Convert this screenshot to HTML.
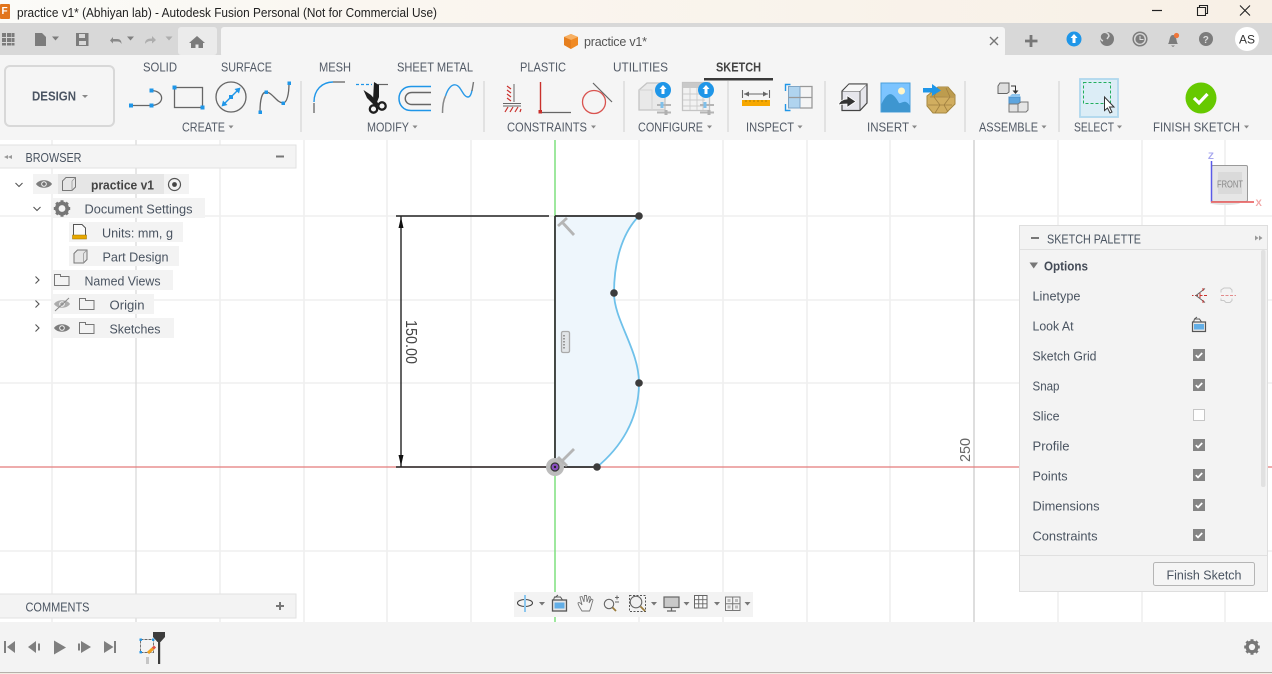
<!DOCTYPE html>
<html><head><meta charset="utf-8"><title>practice v1</title>
<style>
html,body{margin:0;padding:0;background:#fff;width:1272px;height:674px;overflow:hidden}
svg{display:block}
text{font-family:"Liberation Sans",sans-serif;fill:#4b5563;font-size:12px}
.t{font-size:13px;fill:#525a66}
.b{font-size:13px;fill:#4a5461}
.g{fill:#777;stroke:none}
.l{fill:none;stroke:#666;stroke-width:1.3}
.bl{fill:#1f96e8;stroke:none}
</style></head><body>
<svg width="1272" height="674" viewBox="0 0 1272 674" xmlns="http://www.w3.org/2000/svg">
<defs>
<linearGradient id="tb" x1="0" x2="1" y1="0" y2="0"><stop offset="0" stop-color="#fbfbf8"/><stop offset=".3" stop-color="#faf6f0"/><stop offset="1" stop-color="#f8f0e6"/></linearGradient>
<symbol id="cb" viewBox="0 0 12 12" overflow="visible"><rect width="12" height="12" fill="#858585"/><path d="M2.8 6.2l2.2 2.2 4.2-4.4" fill="none" stroke="#fff" stroke-width="1.7"/></symbol>
<symbol id="folder" viewBox="0 0 16 12" overflow="visible"><path d="M.5 11.5V.5H6.5V2.5H15V11.5Z" fill="none" stroke="#777" stroke-width="1"/></symbol>
<symbol id="eye" viewBox="0 0 16 10" overflow="visible"><path d="M0 5C3 0 13 0 16 5C13 10 3 10 0 5Z" fill="#7d7d7d"/><circle cx="8" cy="5" r="2.8" fill="#f5f5f5"/><circle cx="8" cy="5" r="1.8" fill="#707070"/></symbol>
<symbol id="cube" viewBox="0 0 14 14" overflow="visible"><path d="M.5 4L4 .5H13.5V10L10 13.5H.5Z" fill="#e6e6e6" stroke="#777"/><path d="M10 13.5V4M10 4L13.5 .5" fill="none" stroke="#999" stroke-width=".8"/></symbol>
</defs>

<!-- canvas -->
<rect width="1272" height="674" fill="#fff"/>
<g stroke="#efefef" stroke-width="1.6">
<path d="M52 140V622M220 140V622M304 140V622M387 140V622M471 140V622M639 140V622M723 140V622M807 140V622M890 140V622M1058 140V622M1142 140V622M1225 140V622"/>
<path d="M0 216H1272M0 300H1272M0 383H1272M0 551H1272"/>
</g>
<path d="M136 140V622" stroke="#dddddd" stroke-width="1.4"/>
<path d="M974 140V622" stroke="#cfcfcf" stroke-width="1.4"/>
<path d="M555 140V622" stroke="#7fe07f" stroke-width="1.5"/>
<path d="M0 467H1272" stroke="#e37b7b" stroke-width="1.2"/>

<!-- sketch -->
<path d="M555 216H639C622 233 614 262 614 293C614 320 639 350 639 383C639 420 620 448 597 467H555Z" fill="#eef6fc"/>
<path d="M639 216C622 233 614 262 614 293C614 320 639 350 639 383C639 420 620 448 597 467" fill="none" stroke="#6fc1ea" stroke-width="1.8"/>
<path d="M555 216H639M555 216V467M555 467H597" fill="none" stroke="#2c2c2c" stroke-width="1.7"/>
<path d="M396 216H549M396 467H549M401 216V467" fill="none" stroke="#222" stroke-width="1.4"/>
<path d="M401 217l-2.5 11h5zM401 466l-2.5-11h5z" fill="#111"/>
<g fill="#3c3c3c"><circle cx="639" cy="216" r="3.8"/><circle cx="614" cy="293" r="3.8"/><circle cx="639" cy="383" r="3.8"/><circle cx="597" cy="467" r="3.8"/></g>
<circle cx="555" cy="467" r="9" fill="#bcbcbc"/>
<circle cx="555" cy="467" r="4" fill="#8a4fc0" stroke="#333" stroke-width="1.2"/>
<circle cx="555" cy="467" r="1.2" fill="#222"/>
<g stroke="#b5b5b5" stroke-width="2.8" fill="none">
<path d="M558 226L567 218M562 222L574 235"/>
<path d="M558 457L567 466M562 461L574 449"/>
</g>
<rect x="561.500" y="331.500" width="8" height="21" rx="1.500" fill="#e2e5e8" stroke="#aaa" stroke-width="1.300"/>
<path d="M564 335v14" stroke="#999" stroke-width="2" stroke-dasharray="1.500 1.500"/>
<text transform="translate(406,320) rotate(90)" style="font-size:15.500px;fill:#444" textLength="44" lengthAdjust="spacingAndGlyphs">150.00</text>
<text transform="translate(970,462) rotate(-90)" style="font-size:15px;fill:#666" textLength="24" lengthAdjust="spacingAndGlyphs">250</text>

<!-- title bar -->
<rect width="1272" height="23" fill="url(#tb)"/>
<rect x="0" y="4" width="10" height="15" rx="1" fill="#e2751c"/>
<text x="1.500" y="14" style="font-size:10px;font-weight:bold;fill:#fff">F</text>
<text x="17" y="17" style="font-size:12.500px;fill:#222" textLength="420" lengthAdjust="spacingAndGlyphs">practice v1* (Abhiyan lab) - Autodesk Fusion Personal (Not for Commercial Use)</text>
<path d="M1152 10.500H1162" stroke="#222" stroke-width="1.200"/>
<path d="M1197.500 7.500H1205.500V15.500H1197.500ZM1199.500 7V5.500H1207.500V13.500H1206" fill="none" stroke="#222" stroke-width="1.100"/>
<path d="M1240 5.500L1250 15.500M1250 5.500L1240 15.500" stroke="#222" stroke-width="1.100"/>

<!-- tab bar -->
<rect y="23" width="1272" height="32" fill="#d8d8d8"/>
<rect x="178" y="27" width="39" height="28" rx="3" fill="#ebebeb"/>
<rect x="221" y="27" width="784" height="30" rx="3" fill="#f5f5f5"/>
<g fill="#7c7c7c">
<path d="M2 33h4v4h-4zM7 33h4v4h-4zM11.500 33h3v4h-3zM2 38h4v4h-4zM7 38h4v4h-4zM11.500 38h3v4h-3zM2 43h4v2.500h-4zM7 43h4v2.500h-4zM11.500 43h3v2.500h-3z"/>
<path d="M35 33h7l4 4v9H35z"/><path d="M52 36.500h7l-3.500 4z"/>
<path d="M76 33h12.500v13H76z"/>
</g>
<rect x="79" y="34" width="6" height="4" fill="#d8d8d8"/><rect x="79" y="41" width="7" height="4" fill="#d8d8d8"/>
<path d="M110 40.500l3-3.500v2h4c3 0 4.500 1.500 4.500 5c-1-2-2-2.500-4.500-2.500h-4v2z" fill="#888"/>
<path d="M127 36.500h7l-3.500 4z" fill="#808080"/>
<path d="M165.500 36.500h7l-3.500 4z" fill="#adadad"/>
<path d="M145 44c0-4 2-5.500 7-5.500v-2.500l4 4-4 3.500v-2.500c-3.500 0-5 .5-7 3z" fill="#adadad"/>
<path d="M197 36l-8 7h2v5h4.500v-3.500h3V48h4.500v-5h2z" fill="#7c7c7c"/>
<path d="M571 34l7 3v8l-7 4-7-4v-8z" fill="#f08a24"/><path d="M564 37l7 3 7-3-7-3z" fill="#f7b063"/><path d="M571 40v9l-7-4v-8z" fill="#e67f1f"/>
<text x="584" y="46" style="font-size:12.500px;fill:#555" textLength="63">practice v1*</text>
<path d="M990 37l8 8M998 37l-8 8" stroke="#777" stroke-width="1.400"/>
<path d="M1031 35v12M1025 41h12.500" stroke="#777" stroke-width="2.800"/>
<circle cx="1074" cy="39" r="7.500" fill="#1f96e8"/><path d="M1074 34l3.500 4h-2v5h-3v-5h-2z" fill="#fff"/>
<circle cx="1107" cy="39" r="7" fill="#7c7c7c"/><path d="M1103 41a4.500 4.500 0 1 1 6 -5l-2 3" stroke="#d8d8d8" stroke-width="1.500" fill="none"/>
<circle cx="1140" cy="39" r="6.800" fill="none" stroke="#7c7c7c" stroke-width="1.500"/><circle cx="1140" cy="39" r="4.600" fill="#7c7c7c"/><path d="M1140 36v3.500h3.500" stroke="#e0e0e0" stroke-width="1" fill="none"/>
<path d="M1168 44c2-2 1-9 5-9s3 7 5 9zM1171 45.500h4l-2 1.500z" fill="#7c7c7c"/><circle cx="1176.500" cy="35.500" r="2.600" fill="#f0763a"/>
<circle cx="1206" cy="39" r="7" fill="#7c7c7c"/><text x="1202.700" y="43" style="font-size:10px;font-weight:bold;fill:#ddd">?</text>
<circle cx="1247" cy="39" r="12" fill="#fff"/>
<text x="1247" y="43.500" text-anchor="middle" style="font-size:12px;fill:#333">AS</text>

<!-- toolbar -->
<rect y="55" width="1272" height="85" fill="#f5f5f5"/>
<rect x="5" y="66" width="109" height="60" rx="5" fill="#f5f5f5" stroke="#d8d8d8" stroke-width="2"/>
<text x="32" y="100.500" style="font-size:13px;font-weight:bold;fill:#4b5563" textLength="44" lengthAdjust="spacingAndGlyphs">DESIGN</text>
<path d="M82 95h6l-3 3z" fill="#888"/>

<g class="tabs">
<text class="t" x="143" y="71.500" textLength="34" lengthAdjust="spacingAndGlyphs">SOLID</text>
<text class="t" x="221" y="71.500" textLength="51" lengthAdjust="spacingAndGlyphs">SURFACE</text>
<text class="t" x="319" y="71.500" textLength="32" lengthAdjust="spacingAndGlyphs">MESH</text>
<text class="t" x="397" y="71.500" textLength="76" lengthAdjust="spacingAndGlyphs">SHEET METAL</text>
<text class="t" x="520" y="71.500" textLength="46" lengthAdjust="spacingAndGlyphs">PLASTIC</text>
<text class="t" x="613" y="71.500" textLength="55" lengthAdjust="spacingAndGlyphs">UTILITIES</text>
<text x="716" y="71.500" style="font-size:13px;font-weight:bold;fill:#444" textLength="45" lengthAdjust="spacingAndGlyphs">SKETCH</text>
</g>
<rect x="704" y="78" width="69" height="2.500" fill="#3a3a3a"/>

<g stroke="#dcdcdc" stroke-width="1.500">
<path d="M301 81V132M484 81V132M624 81V132M728 81V132M825 81V132M965 81V132M1059 81V132"/>
</g>

<g>
<text class="t" x="182" y="131.500" textLength="43" lengthAdjust="spacingAndGlyphs">CREATE</text>
<text class="t" x="367" y="131.500" textLength="42" lengthAdjust="spacingAndGlyphs">MODIFY</text>
<text class="t" x="507" y="131.500" textLength="80" lengthAdjust="spacingAndGlyphs">CONSTRAINTS</text>
<text class="t" x="638" y="131.500" textLength="65" lengthAdjust="spacingAndGlyphs">CONFIGURE</text>
<text class="t" x="746" y="131.500" textLength="48" lengthAdjust="spacingAndGlyphs">INSPECT</text>
<text class="t" x="867" y="131.500" textLength="42" lengthAdjust="spacingAndGlyphs">INSERT</text>
<text class="t" x="979" y="131.500" textLength="59" lengthAdjust="spacingAndGlyphs">ASSEMBLE</text>
<text class="t" x="1074" y="131.500" textLength="40" lengthAdjust="spacingAndGlyphs">SELECT</text>
<text class="t" x="1153" y="131.500" textLength="87" lengthAdjust="spacingAndGlyphs">FINISH SKETCH</text>
</g>
<path d="M228.500 125.500h5l-2.500 3zM412.500 125.500h5l-2.500 3zM591 125.500h5l-2.500 3zM707 125.500h5l-2.500 3zM797.500 125.500h5l-2.500 3zM912 125.500h5l-2.500 3zM1041.500 125.500h5l-2.500 3zM1117 125.500h5l-2.500 3zM1244 125.500h5l-2.500 3z" fill="#888"/>

<!-- create icons -->
<path d="M131 105.500H151.500M151.500 90.500C165 91 165 105 151.500 105.500" class="l"/>
<g class="bl"><rect x="129" y="103.500" width="4" height="4"/><rect x="149.500" y="103.500" width="4" height="4"/><rect x="149.500" y="88.500" width="4" height="4"/></g>
<rect x="174.500" y="87.500" width="28" height="20" class="l"/>
<g class="bl"><rect x="172.500" y="85.500" width="4" height="4"/><rect x="200.500" y="105.500" width="4" height="4"/></g>
<circle cx="231" cy="97" r="15" class="l"/>
<path d="M223 105L239 89" stroke="#1f96e8" stroke-width="1.400"/>
<path d="M221.500 106.500l1.500-6 4.500 4.500zM240.500 87.500l-1.500 6-4.500-4.500z" class="bl"/><rect x="229" y="95" width="4" height="4" class="bl"/>
<path d="M260 112C260 100 262 92 266 92C272 92 277 103 283 103C287 103 289 94 289 83" class="l"/>
<g class="bl"><rect x="258.500" y="110.500" width="3.500" height="3.500"/><rect x="264.500" y="90.500" width="3.500" height="3.500"/><rect x="281.500" y="101.500" width="3.500" height="3.500"/><rect x="287.500" y="81.500" width="3.500" height="3.500"/></g>
<!-- modify icons -->
<path d="M314 113V103" class="l"/><path d="M333 82H345" class="l"/>
<path d="M314 102C314 90 322 82 333 82" fill="none" stroke="#1f96e8" stroke-width="1.400"/>
<path d="M356 84.500H372" stroke="#1f96e8" stroke-width="1.200" stroke-dasharray="3 2"/><path d="M378 84.500H388" stroke="#666" stroke-width="1.200"/>
<path d="M374 82L379 85L379 97L376.500 103.500L373 100.500Z" fill="#1e1e1e"/>
<path d="M363.500 90L371 95L379 104L376 107L367 98Z" fill="#1e1e1e"/>
<circle cx="373.500" cy="109" r="3.700" fill="none" stroke="#1e1e1e" stroke-width="2.300"/><circle cx="382" cy="106" r="3.700" fill="none" stroke="#1e1e1e" stroke-width="2.300"/>
<path d="M431 86.500H411C395 86.500 395 110.500 411 110.500H431" fill="none" stroke="#1f96e8" stroke-width="1.500"/>
<path d="M431 92.500H412C403 92.500 403 104.500 412 104.500H431" fill="none" stroke="#666" stroke-width="1.400"/>
<path d="M442.500 113C442.500 106 443.500 100 445.500 96" fill="none" stroke="#888" stroke-width="1.500"/>
<path d="M445.500 96C448 88 452 84 456 85C461 86 463 97 468 97C470 97 471.500 94 472 90" fill="none" stroke="#2a9ae8" stroke-width="1.400"/><path d="M472 91C472.500 88 473 85 473.500 82" fill="none" stroke="#777" stroke-width="1.400"/>
<!-- constraints -->
<path d="M514 84V102M503 103.500H521M503 106H521" stroke="#666" stroke-width="1"/>
<path d="M507 86l4 3M507 90l4 3M507 94l4 3M507 98l4 3M505 112l3-5M510 112l3-5M515 112l3-5M520 112l1-3" stroke="#c9302c" stroke-width="1.200"/>
<path d="M540.500 82V112" stroke="#c9302c" stroke-width="1.400"/><rect x="538.500" y="110" width="3.500" height="3.500" fill="#c9302c"/><path d="M542 112.500H571" stroke="#666" stroke-width="1.200"/>
<circle cx="594" cy="102" r="11.500" fill="none" stroke="#d9534f" stroke-width="1.300"/><path d="M593 83L612 102" stroke="#666" stroke-width="1.200"/>
<!-- configure -->
<path d="M639 90L647 83H665V110H639Z" fill="#e9e9e9" stroke="#c4c4c4" stroke-width="1.300"/>
<path d="M652 110V90H639" stroke="#d4d4d4" fill="none"/>
<circle cx="663" cy="90" r="8" fill="#1f96e8"/><path d="M663 85l3.500 4h-2v5h-3v-5h-2z" fill="#fff"/>
<path d="M657 105H671M657 112.500H671" stroke="#b5b5b5" stroke-width="2"/><path d="M662 102V108" stroke="#7fc0ea" stroke-width="3"/><path d="M666 110V115" stroke="#b0b0b0" stroke-width="3"/>
<rect x="682.500" y="82.500" width="27" height="28" fill="#f2f2f2" stroke="#c4c4c4" stroke-width="1.300"/>
<rect x="683" y="83" width="26" height="5" fill="#c9c9c9"/>
<path d="M683 94H705M683 100H705M683 106H705M690 88V110M697 88V110M703 88V110" stroke="#cccccc" stroke-width=".9"/>
<circle cx="706" cy="90" r="8" fill="#1f96e8"/><path d="M706 85l3.500 4h-2v5h-3v-5h-2z" fill="#fff"/>
<path d="M700 105H714M700 112.500H714" stroke="#b5b5b5" stroke-width="2"/><path d="M705 102V108" stroke="#7fc0ea" stroke-width="3"/><path d="M709 110V115" stroke="#b0b0b0" stroke-width="3"/>
<!-- inspect -->
<path d="M742.500 90V98M769.500 90V98M744 94H768" stroke="#666" stroke-width="1.100"/><path d="M744 94l5-2.500v5zM768 94l-5-2.500v5z" fill="#666"/>
<rect x="742" y="100" width="28" height="6" fill="#f7a800"/><path d="M746 100v2M750 100v2M754 100v2M758 100v2M762 100v2M766 100v2" stroke="#9a7200" stroke-width=".8"/>
<rect x="788.500" y="86.500" width="11.500" height="21.500" fill="#b0d4ef" stroke="#7fa5c5"/>
<path d="M788.500 97.500H800M800 86.500H812V108H800M800 97.500H812" fill="none" stroke="#999" stroke-width="1.300"/>
<path d="M790.500 84.500H785.500V91M790.500 110.500H785.500V104" fill="none" stroke="#1f96e8" stroke-width="1.400"/>
<!-- insert -->
<path d="M842 91L849 84H867V103L860 110.500H842Z" fill="#e6e6ec" stroke="#444" stroke-width="1.200"/><path d="M860 110V91H842M860 91L867 84" fill="none" stroke="#555" stroke-width="1"/>
<path d="M849 84.500H866.500L860 91H843Z" fill="#f7f7f7"/>
<path d="M838 105C840 101 843 99 847 99V95.500L856 101.500L847 107.500V104C844 104 841 104 838 105Z" fill="#333" stroke="#fff" stroke-width=".8"/>
<rect x="881" y="83" width="29" height="29" fill="#7cc4ff" stroke="#4aa0dc"/>
<path d="M881.500 112V104C888 90 893 92 899 103C902 104 905 98 910 106V112Z" fill="#3e96d0"/>
<circle cx="901.500" cy="91" r="3.500" fill="#fff5c8"/>
<path d="M927 96L938 87H948L955 95V104L946 113H933L927 106Z" fill="#d1ae60" stroke="#a5873f"/>
<path d="M936 88L948 88L955 96L930 97Z" fill="#bd9c4e"/>
<path d="M930 97H954M928 105H952M938 88L934 97L940 105L935 113M946 88L950 97L944 105L948 112M934 97L940 105M950 97L944 105" fill="none" stroke="#a08040" stroke-width=".8"/>
<path d="M923 88H932V84L941 90.500L932 96V92.500H923Z" fill="#1f96e8"/>
<!-- assemble -->
<path d="M998 86L1000 83H1009V92L1007 93.500H998Z" fill="#dfdfdf" stroke="#666"/>
<path d="M1011 86H1015.500V91" fill="none" stroke="#333"/><path d="M1012.500 90.500h6l-3 3.500z" fill="#333"/>
<rect x="1009" y="97" width="11" height="10" fill="#5ea5de" stroke="#4a8fc8"/>
<path d="M1009 97L1012 94H1020V97Z" fill="#8fc5ee"/>
<rect x="1009" y="104" width="9" height="8" fill="#e2e2e2" stroke="#777"/>
<path d="M1018 104L1021 102H1028V110L1026 112H1018Z" fill="#e6e6e6" stroke="#777"/>
<!-- select -->
<rect x="1080" y="79" width="38" height="38" fill="#dcedf6" stroke="#b0d8ee" stroke-width="1.800"/>
<rect x="1083.500" y="82.500" width="27" height="21" fill="none" stroke="#22ae5c" stroke-width="1" stroke-dasharray="3 2"/>
<path d="M1104.500 97V110.500L1107.500 108L1110 113L1112 112L1109.500 107H1114Z" fill="#fff" stroke="#333" stroke-width="1"/>
<!-- finish -->
<circle cx="1201" cy="98" r="15.500" fill="#66c900"/>
<path d="M1194 98l5 5 8.500-9" fill="none" stroke="#fff" stroke-width="3.200"/>

<!-- browser -->
<rect x="-1" y="145" width="297" height="23" fill="#f4f4f4" stroke="#e2e2e2"/>
<path d="M8 155v4l-4-2zM12 155v4l-4-2z" fill="#999"/>
<text class="b" x="25.500" y="162" textLength="56" lengthAdjust="spacingAndGlyphs">BROWSER</text>
<rect x="276" y="155.500" width="8" height="2" fill="#777"/>
<g fill="#f3f3f3">
<rect x="33" y="174" width="156" height="20"/>
<rect x="53" y="198" width="152" height="20"/>
<rect x="69" y="222" width="114" height="20"/>
<rect x="69" y="246" width="110" height="20"/>
<rect x="53" y="270" width="120" height="20"/>
<rect x="53" y="294" width="101" height="20"/>
<rect x="53" y="318" width="121" height="20"/>
</g>
<rect x="58" y="174" width="106" height="20" fill="#e6e6e6"/>
<path d="M15.500 183l3.500 3.500 3.500-3.500M33.500 207l3.500 3.500 3.500-3.500M35.500 276.500l3.500 3.500-3.500 3.500M35.500 300.500l3.500 3.500-3.500 3.500M35.500 324.500l3.500 3.500-3.500 3.500" fill="none" stroke="#555" stroke-width="1.100"/>
<use href="#eye" x="36" y="179" width="16" height="10"/>
<use href="#cube" x="62" y="177" width="14" height="14"/>
<text x="91" y="189.500" style="font-size:13px;font-weight:bold;fill:#444" textLength="63" lengthAdjust="spacingAndGlyphs">practice v1</text>
<circle cx="174.500" cy="184.500" r="6" fill="none" stroke="#555" stroke-width="1.200"/><circle cx="174.500" cy="184.500" r="2.400" fill="#444"/>
<!-- gear -->
<g transform="translate(62,208.500)"><circle r="5.200" fill="none" stroke="#777" stroke-width="3.600"/><path d="M-1.500 -8.200h3v3h-3zM-1.500 5.200h3v3h-3zM-8.200 -1.500h3v3h-3zM5.200 -1.500h3v3h-3z" fill="#777"/><path d="M-1.500 -8.200h3v3h-3zM-1.500 5.200h3v3h-3zM-8.200 -1.500h3v3h-3zM5.200 -1.500h3v3h-3z" fill="#777" transform="rotate(45)"/></g>
<text class="b" x="84.500" y="213.500" textLength="108" lengthAdjust="spacingAndGlyphs">Document Settings</text>
<path d="M73.500 224.500H82L85.500 228V237H73.500Z" fill="#fafafa" stroke="#555"/><rect x="72.500" y="235" width="14" height="4" fill="#e8a800" stroke="#9a7200" stroke-width=".5"/>
<text class="b" x="102" y="237.500" textLength="71" lengthAdjust="spacingAndGlyphs">Units: mm, g</text>
<use href="#cube" x="73.500" y="249.500" width="14" height="14"/>
<text class="b" x="102.500" y="261.500" textLength="66" lengthAdjust="spacingAndGlyphs">Part Design</text>
<use href="#folder" x="54" y="274" width="16" height="12"/>
<text class="b" x="84.500" y="285.500" textLength="76" lengthAdjust="spacingAndGlyphs">Named Views</text>
<use href="#eye" x="54" y="299" width="16" height="10" opacity=".6"/><path d="M55 311L69 298" stroke="#888" stroke-width="1"/>
<use href="#folder" x="79" y="298" width="16" height="12"/>
<text class="b" x="109.500" y="309.500" textLength="35" lengthAdjust="spacingAndGlyphs">Origin</text>
<use href="#eye" x="54" y="323" width="16" height="10"/>
<use href="#folder" x="79" y="322" width="16" height="12"/>
<text class="b" x="109.500" y="333.500" textLength="51" lengthAdjust="spacingAndGlyphs">Sketches</text>

<!-- comments -->
<rect x="-1" y="594" width="297" height="24" fill="#f3f3f3" stroke="#e2e2e2"/>
<text class="b" x="25.500" y="611.500" textLength="64" lengthAdjust="spacingAndGlyphs">COMMENTS</text>
<path d="M280 602v8M276 606h8" stroke="#777" stroke-width="2"/>

<!-- nav bar -->
<rect x="514" y="592" width="239" height="25" fill="#f3f3f3"/>
<ellipse cx="525" cy="603" rx="7.500" ry="3.500" fill="none" stroke="#444" stroke-width="1.100"/>
<path d="M525 595V612" stroke="#8cc7ee" stroke-width="2"/>
<path d="M539 602h6l-3 3.500zM651 602h6l-3 3.500zM683.500 602h6l-3 3.500zM714 602h6l-3 3.500zM744.500 602h6l-3 3.500z" fill="#777"/>
<rect x="552.500" y="600" width="14" height="11" fill="#e6e6e6" stroke="#555" stroke-width="1.300"/>
<rect x="554.500" y="602.500" width="10" height="6" fill="#62aee6"/>
<path d="M553.500 600l1-3h6l2 3M558 595l-3 2.500" fill="none" stroke="#555" stroke-width="1"/>
<path d="M582 611C580 608 578 605 578 603C579 602 581 603 582 605L580 597L582 596.500L584 602L584.500 595.500H586.500L587 602L589 596.500L590.500 597L589 603L591.500 599L593 600C591.500 604 591 608 589.500 611Z" fill="#f5f5f5" stroke="#777" stroke-width=".9"/>
<circle cx="609" cy="604" r="4.700" fill="#f0f0f0" stroke="#666" stroke-width="1.100"/><path d="M612.500 607.500L616 611" stroke="#9a7b3c" stroke-width="1.800"/>
<path d="M617 595.500v4M615 597.500h4M615 602h4" stroke="#666" stroke-width="1"/>
<rect x="629.500" y="595.500" width="16" height="16" fill="none" stroke="#555" stroke-width="1" stroke-dasharray="2 1.500"/>
<circle cx="636" cy="602" r="5.800" fill="#f0f0f0" stroke="#666" stroke-width="1.100"/><path d="M640.500 606.500L645 611" stroke="#9a7b3c" stroke-width="1.800"/>
<rect x="664" y="597" width="15" height="10.500" fill="#c9c9c9" stroke="#666" stroke-width="1.200"/>
<path d="M671.500 608V610.500M667 611H676" stroke="#666" stroke-width="1.300"/>
<rect x="694.500" y="595.500" width="12.500" height="12.500" fill="#fafafa" stroke="#666"/><path d="M694.500 599.700H707M694.500 603.800H707M698.700 595.500V608M702.800 595.500V608" stroke="#666" stroke-width=".9"/>
<rect x="725.500" y="597" width="14.500" height="13.500" fill="#f3f3f3" stroke="#777"/><path d="M725.500 603.700H740M732.700 597V610.500" stroke="#777"/>
<g fill="#bbb"><rect x="727.500" y="599" width="3" height="3"/><rect x="735" y="599" width="3" height="3"/><rect x="727.500" y="605.500" width="3" height="3"/><rect x="735" y="605.500" width="3" height="3"/></g>

<!-- viewcube -->
<ellipse cx="1225" cy="203" rx="15" ry="2" fill="#e2e2e2"/>
<rect x="1211.500" y="165.500" width="36" height="36" rx="1.500" fill="#e6e6e6" stroke="#9a9a9a"/>
<rect x="1218" y="172" width="24" height="22" fill="#dadada"/>
<text x="1217" y="187.500" style="font-size:10px;fill:#888" textLength="26" lengthAdjust="spacingAndGlyphs">FRONT</text>
<path d="M1211.500 161V202" stroke="#5a5ae8" stroke-width="1.500"/>
<path d="M1211 202H1254" stroke="#ea6a6a" stroke-width="1.800"/>
<text x="1208" y="159" style="font-size:9.500px;font-weight:bold;fill:#a5a5ee">Z</text>
<text x="1255.500" y="206" style="font-size:9.500px;font-weight:bold;fill:#f0a5a5">X</text>

<!-- palette -->
<rect x="1019.500" y="225.500" width="248" height="366" fill="#f3f3f3" stroke="#dedede"/>
<path d="M1020 249.500H1267M1020 555.500H1267" stroke="#e0e0e0"/>
<rect x="1031" y="237" width="8" height="2" fill="#777"/>
<text class="b" x="1047" y="243.500" textLength="94" lengthAdjust="spacingAndGlyphs">SKETCH PALETTE</text>
<path d="M1255 235.500v5l3.500-2.500zM1259 235.500v5l3.500-2.500z" fill="#999"/>
<rect x="1261" y="250" width="4.500" height="237" rx="2" fill="#e1e1e1"/>
<path d="M1029.500 262.500H1038L1033.700 268.500Z" fill="#777"/>
<text x="1044" y="270.500" style="font-size:13px;font-weight:bold;fill:#444b57" textLength="44" lengthAdjust="spacingAndGlyphs">Options</text>
<g>
<text class="b" x="1032.500" y="300.500" textLength="48" lengthAdjust="spacingAndGlyphs">Linetype</text>
<text class="b" x="1032.500" y="330.500" textLength="41" lengthAdjust="spacingAndGlyphs">Look At</text>
<text class="b" x="1032.500" y="360.500" textLength="64" lengthAdjust="spacingAndGlyphs">Sketch Grid</text>
<text class="b" x="1032.500" y="390.500" textLength="27" lengthAdjust="spacingAndGlyphs">Snap</text>
<text class="b" x="1032.500" y="420.500" textLength="27" lengthAdjust="spacingAndGlyphs">Slice</text>
<text class="b" x="1032.500" y="450.500" textLength="37" lengthAdjust="spacingAndGlyphs">Profile</text>
<text class="b" x="1032.500" y="480.500" textLength="35" lengthAdjust="spacingAndGlyphs">Points</text>
<text class="b" x="1032.500" y="510.500" textLength="67" lengthAdjust="spacingAndGlyphs">Dimensions</text>
<text class="b" x="1032.500" y="540.500" textLength="65" lengthAdjust="spacingAndGlyphs">Constraints</text>
</g>
<path d="M1207 295.500H1192" stroke="#c9302c" stroke-width="1" stroke-dasharray="3 1.500"/>
<path d="M1205 288.500L1196 295.500L1205 302.500" fill="none" stroke="#666" stroke-width="1"/>
<path d="M1203 288V291M1203 300V303M1200 293V298" stroke="#c9302c" stroke-width="1"/>
<path d="M1221 292.500V290L1224 288H1230L1232 290V292.500M1221 298.500V300.500H1224L1226 302.500H1230L1232 300.500V298.500" fill="none" stroke="#c8c8c8" stroke-width="1"/>
<path d="M1221 295.500H1236" stroke="#e28a8a" stroke-width="1" stroke-dasharray="3 1.500"/>
<rect x="1192.500" y="322" width="13" height="9.500" fill="#e6e6e6" stroke="#555" stroke-width="1.200"/>
<rect x="1194" y="324" width="10" height="5.500" fill="#62aee6"/>
<path d="M1193.500 322l1-3h5l2 3M1197 317l-2.500 2" fill="none" stroke="#555" stroke-width="1"/>
<use href="#cb" x="1193" y="349" width="12" height="12"/>
<use href="#cb" x="1193" y="379" width="12" height="12"/>
<rect x="1193.500" y="409.500" width="11" height="11" fill="#fff" stroke="#c6c6c6"/>
<use href="#cb" x="1193" y="439" width="12" height="12"/>
<use href="#cb" x="1193" y="469" width="12" height="12"/>
<use href="#cb" x="1193" y="499" width="12" height="12"/>
<use href="#cb" x="1193" y="529" width="12" height="12"/>
<rect x="1153.500" y="562.500" width="101" height="23" rx="2" fill="#f5f5f5" stroke="#b5b5b5"/>
<text class="b" x="1166.500" y="579.500" textLength="75" lengthAdjust="spacingAndGlyphs">Finish Sketch</text>

<!-- bottom bar -->
<rect y="622" width="1272" height="50" fill="#f3f3f3"/>
<rect y="672" width="1272" height="1" fill="#b5b0aa"/>
<rect y="673" width="1272" height="1" fill="#f2ece3"/>
<g fill="#7f7f7f">
<rect x="4" y="641" width="2" height="12"/><path d="M15 641V653L7 647Z"/>
<path d="M28 647L36 641V653Z"/><rect x="38" y="643.500" width="2" height="7"/>
<path d="M54 640.500V654.500L66 647.500Z"/>
<rect x="78" y="643.500" width="2" height="7"/><path d="M81 641V653L91 647Z"/>
<path d="M104 641V653L113.500 647Z"/><rect x="114" y="641" width="2" height="12"/>
</g>
<rect x="140.500" y="639.500" width="13" height="13" fill="none" stroke="#666" stroke-width=".9" stroke-dasharray="3 1"/>
<g class="bl"><rect x="139.500" y="638.500" width="2.400" height="2.400"/><rect x="152" y="638.500" width="2.400" height="2.400"/><rect x="139.500" y="651" width="2.400" height="2.400"/></g>
<path d="M148 653L153.500 648" stroke="#f0a020" stroke-width="3"/><path d="M153 648.500L155 646.500" stroke="#e0504a" stroke-width="3"/>
<rect x="146" y="657" width="3" height="7" fill="#c6c6c6"/>
<path d="M153 632H165V637L160.500 642H157.500L153 637Z" fill="#3c3c3c"/>
<rect x="158" y="640" width="2.200" height="24" fill="#3c3c3c"/>
<g transform="translate(1252,647)"><circle r="4.800" fill="none" stroke="#777" stroke-width="3.300"/><path d="M-1.500 -7.800h3v3h-3zM-1.500 4.800h3v3h-3zM-7.800 -1.500h3v3h-3zM4.800 -1.500h3v3h-3z" fill="#777"/><path d="M-1.500 -7.800h3v3h-3zM-1.500 4.800h3v3h-3zM-7.800 -1.500h3v3h-3zM4.800 -1.500h3v3h-3z" fill="#777" transform="rotate(45)"/></g>
</svg>
</body></html>
